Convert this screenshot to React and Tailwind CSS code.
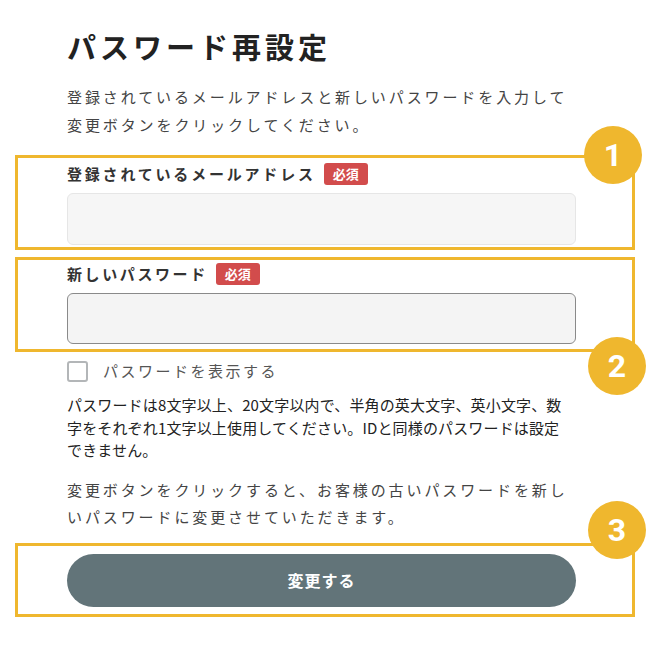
import React, { useState } from 'react';

const jp = { fontFamily: '"Noto Sans CJK JP", "Noto Sans", sans-serif' };

function Marker({ n, className }) {
  return (
    <div
      className={`absolute flex h-[58px] w-[58px] items-center justify-center rounded-full bg-[#efb72e] text-[32px] font-bold text-white ${className}`}
      style={{ fontFamily: 'Roboto, "Liberation Sans", sans-serif' }}
    >
      {n}
    </div>
  );
}

function Required() {
  return (
    <span className="ml-2 inline-flex h-[22px] items-center rounded-[3px] bg-[#d24c4c] px-[9px] text-[13px] font-bold text-white">
      必須
    </span>
  );
}

export default function App() {
  const [showPassword, setShowPassword] = useState(false);

  return (
    <div className="h-[650px] w-[650px] overflow-hidden bg-white pt-[25px] text-[#333]" style={jp}>
      <div className="px-[67px]">
        <h1 className="text-[29px] font-bold leading-[42px] tracking-[4px] text-[#222]">
          パスワード再設定
        </h1>
        <p className="mt-[16px] text-[15px] leading-[28px] tracking-[2.9px] text-[#444]">
          登録されているメールアドレスと新しいパスワードを入力して
          <br />
          変更ボタンをクリックしてください。
        </p>
      </div>

      {/* Email */}
      <div className="relative mx-[15px] mt-[16px] border-[3px] border-[#efb72e] px-[49px] pb-[2px] pt-[4px]">
        <Marker n="1" className="left-[566px] top-[-32px]" />
        <div className="flex h-[24px] items-center">
          <span className="text-[15px] font-bold tracking-[2.8px] text-[#333]">
            登録されているメールアドレス
          </span>
          <Required />
        </div>
        <input
          type="email"
          className="mt-[7px] block h-[52px] w-[509px] rounded-[6px] border border-[#e6e6e6] bg-[#f6f6f6] px-3 outline-none"
        />
      </div>

      {/* Password */}
      <div className="relative mx-[15px] mt-[7px] border-[3px] border-[#efb72e] px-[49px] pb-[5px] pt-[1px]">
        <Marker n="2" className="left-[570px] top-[77px]" />
        <div className="flex h-[26px] items-center">
          <span className="text-[15px] font-bold tracking-[2.6px] text-[#333]">
            新しいパスワード
          </span>
          <Required />
        </div>
        <input
          type={showPassword ? 'text' : 'password'}
          className="mt-[6px] block h-[51px] w-[509px] rounded-[6px] border-[1.5px] border-[#8a8a8a] bg-[#f4f4f4] px-3 outline-none"
        />
      </div>

      <div className="px-[67px]">
        <label className="mt-[9px] flex h-[21px] items-center">
          <span
            onClick={() => setShowPassword(!showPassword)}
            className="h-[21px] w-[21px] rounded-[3px] border-2 border-[#b3b6b8] bg-white"
          />
          <span className="ml-[15px] text-[15px] tracking-[2.5px] text-[#555]">
            パスワードを表示する
          </span>
        </label>

        <p className="mt-[12px] whitespace-nowrap text-[15px] leading-[22.5px] tracking-[0.15px] text-[#222]">
          パスワードは8文字以上、20文字以内で、半角の英大文字、英小文字、数
          <br />
          字をそれぞれ1文字以上使用してください。IDと同様のパスワードは設定
          <br />
          できません。
        </p>

        <p className="mt-[14px] text-[15px] leading-[27px] tracking-[2.9px] text-[#444]">
          変更ボタンをクリックすると、お客様の古いパスワードを新し
          <br />
          いパスワードに変更させていただきます。
        </p>
      </div>

      {/* Submit */}
      <div className="relative mx-[15px] mt-[13px] border-[3px] border-[#efb72e] px-[49px] pb-[7px] pt-[8px]">
        <Marker n="3" className="left-[570px] top-[-45px]" />
        <button className="flex h-[53px] w-[509px] items-center justify-center rounded-full bg-[#627479] text-[16px] font-bold tracking-[1px] text-white">
          変更する
        </button>
      </div>
    </div>
  );
}
